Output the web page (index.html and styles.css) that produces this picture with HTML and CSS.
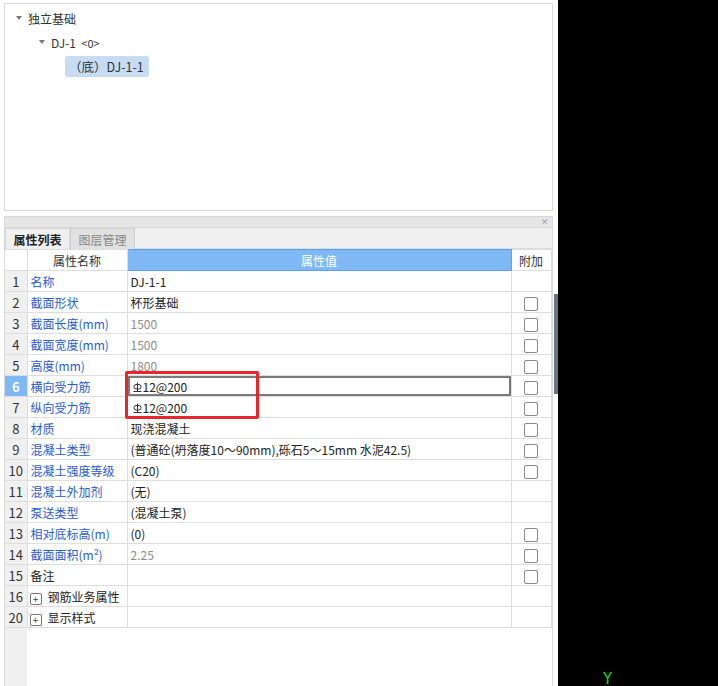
FILE: index.html
```html
<!DOCTYPE html>
<html lang="zh">
<head>
<meta charset="utf-8">
<title>属性列表</title>
<link rel="stylesheet" href="styles.css">
</head>
<body>
<div class="app">
  <div class="left">
    <div class="tree-panel">
      <div class="node lvl0"><span class="tri"></span><span>独立基础</span></div>
      <div class="node lvl1"><span class="tri"></span><span>DJ-1 &nbsp;<small>&lt;0&gt;</small></span></div>
      <div class="node lvl2"><span class="sel">（底）DJ-1-1</span></div>
    </div>
    <div class="prop-panel">
      <div class="titlebar"><span class="close">✕</span></div>
      <div class="tabs">
        <div class="tab active">属性列表</div>
        <div class="tab">图层管理</div>
      </div>
      <div class="grid-wrap">
        <table class="grid">
          <colgroup><col class="c-no"><col class="c-name"><col class="c-val"><col class="c-ext"></colgroup>
          <thead>
            <tr><th class="no"></th><th>属性名称</th><th class="hval">属性值</th><th>附加</th></tr>
          </thead>
          <tbody>
            <tr><td class="no">1</td><td class="nm">名称</td><td>DJ-1-1</td><td></td></tr>
            <tr><td class="no">2</td><td class="nm">截面形状</td><td>杯形基础</td><td><span class="cb"></span></td></tr>
            <tr><td class="no">3</td><td class="nm">截面长度(mm)</td><td class="gr">1500</td><td><span class="cb"></span></td></tr>
            <tr><td class="no">4</td><td class="nm">截面宽度(mm)</td><td class="gr">1500</td><td><span class="cb"></span></td></tr>
            <tr><td class="no">5</td><td class="nm">高度(mm)</td><td class="gr">1800</td><td><span class="cb"></span></td></tr>
            <tr><td class="no cur">6</td><td class="nm">横向受力筋</td><td class="edit"><svg class="rebar" viewBox="0 0 9 11" width="9" height="11"><line x1="4.5" y1="0.5" x2="4.5" y2="9.5"/><rect x="1" y="2.5" width="7" height="4.5" rx="2"/><line x1="0.5" y1="9.5" x2="8.5" y2="9.5"/></svg>12@200</td><td><span class="cb"></span></td></tr>
            <tr><td class="no">7</td><td class="nm">纵向受力筋</td><td><svg class="rebar" viewBox="0 0 9 11" width="9" height="11"><line x1="4.5" y1="0.5" x2="4.5" y2="9.5"/><rect x="1" y="2.5" width="7" height="4.5" rx="2"/><line x1="0.5" y1="9.5" x2="8.5" y2="9.5"/></svg>12@200</td><td><span class="cb"></span></td></tr>
            <tr><td class="no">8</td><td class="nm">材质</td><td>现浇混凝土</td><td><span class="cb"></span></td></tr>
            <tr><td class="no">9</td><td class="nm">混凝土类型</td><td>(普通砼(坍落度10～90mm),砾石5～15mm 水泥42.5)</td><td><span class="cb"></span></td></tr>
            <tr><td class="no">10</td><td class="nm">混凝土强度等级</td><td>(C20)</td><td><span class="cb"></span></td></tr>
            <tr><td class="no">11</td><td class="nm">混凝土外加剂</td><td>(无)</td><td></td></tr>
            <tr><td class="no">12</td><td class="nm">泵送类型</td><td>(混凝土泵)</td><td></td></tr>
            <tr><td class="no">13</td><td class="nm">相对底标高(m)</td><td>(0)</td><td><span class="cb"></span></td></tr>
            <tr><td class="no">14</td><td class="nm">截面面积(m²)</td><td class="gr">2.25</td><td><span class="cb"></span></td></tr>
            <tr><td class="no">15</td><td>备注</td><td></td><td><span class="cb"></span></td></tr>
            <tr><td class="no">16</td><td><span class="plus">+</span>钢筋业务属性</td><td></td><td></td></tr>
            <tr><td class="no">20</td><td><span class="plus">+</span>显示样式</td><td></td><td></td></tr>
          </tbody>
        </table>
        <div class="filler"></div>
        <div class="redbox"></div>
      </div>
    </div>
  </div>
  <div class="gutter"><span class="thumb"></span></div>
  <div class="canvas"><span class="axis-y">Y</span></div>
</div>
</body>
</html>
```

FILE: styles.css
```css
* { box-sizing: border-box; }
html, body { margin: 0; padding: 0; }
body {
  font-family: "Noto Sans CJK SC", "Microsoft YaHei", "Noto Sans", sans-serif;
  font-size: 12px;
  color: #222;
  background: #fff;
  width: 718px;
  height: 686px;
  overflow: hidden;
}
.app { display: flex; height: 686px; }
.left {
  width: 553px;
  display: flex;
  flex-direction: column;
  padding: 3px 0 0 4px;
}
.tree-panel {
  height: 208px;
  border: 1px solid #dadada;
  padding-top: 2px;
  display: flex;
  flex-direction: column;
}
.node {
  height: 24px;
  display: flex;
  align-items: center;
  font-size: 12px;
  color: #333;
}
.node small { font-size: 11px; }
.lvl0 { padding-left: 11px; }
.lvl1 { padding-left: 34px; }
.lvl2 { padding-left: 60px; }
.tri {
  width: 0; height: 0;
  border-left: 3.5px solid transparent;
  border-right: 3.5px solid transparent;
  border-top: 4px solid #777;
  margin-right: 6px;
}
.sel {
  background: #c6dcf3;
  border-radius: 3px;
  height: 21px;
  line-height: 21px;
  padding: 0 5px 0 4px;
  margin-top: 1px;
  font-size: 12.5px;
}
.prop-panel {
  margin-top: 5px;
  flex: 1;
  display: flex;
  flex-direction: column;
  border-left: 1px solid #dadada;
  border-right: 1px solid #dadada;
}
.titlebar {
  height: 12px;
  background: #e6e6e6;
  border-top: 1px solid #d6d6d6;
  border-bottom: 1px solid #d9d9d9;
  display: flex;
  justify-content: flex-end;
  align-items: center;
  padding-right: 3px;
}
.close { font-size: 9px; color: #a8a8a8; line-height: 10px; }
.tabs {
  height: 21px;
  background: #f0f0f0;
  display: flex;
  border-bottom: 1px solid #dcdcdc;
}
.tab {
  width: 65px;
  height: 21px;
  display: flex;
  align-items: center;
  justify-content: center;
  font-size: 12px;
  color: #888;
  background: #e1e1e1;
  border: 1px solid #d0d0d0;
  border-bottom: none;
}
.tab.active {
  background: #efefef;
  color: #222;
  font-weight: bold;
  border-color: #d8d8d8;
}
.grid-wrap {
  position: relative;
  flex: 1;
  display: flex;
  flex-direction: column;
  padding-right: 1px;
}
.grid {
  border-collapse: collapse;
  table-layout: fixed;
  width: 546px;
}
.c-no { width: 22px; }
.c-name { width: 100px; }
.c-val { width: 384px; }
.c-ext { width: 40px; }
.grid th, .grid td {
  height: 21px;
  border: 1px solid #dedede;
  padding: 0 0 0 3px;
  white-space: nowrap;
  overflow: hidden;
  font-size: 12px;
  line-height: 19px;
  text-align: left;
}
.grid th { font-weight: normal; text-align: center; padding: 0; color: #333; }
.grid thead th:first-child, .grid td:first-child { border-left: none; }
.grid th.hval { background: #7eb9f5; color: #fff; border: 1px solid #5aa2ee; }
.grid td.no {
  background: #f0f0f0;
  text-align: center;
  padding: 0;
  color: #333;
  font-size: 13px;
}
.grid td.no.cur { background: #7eb9f5; color: #fff; font-weight: bold; }
.grid td.nm { color: #2a5bd7; }
.grid td.gr { color: #8c8c8c; }
.grid td.edit { box-shadow: inset 0 0 0 2px #7a7a7a; }
.grid td:last-child { text-align: center; padding: 0; }
.rebar {
  fill: none;
  stroke: #333;
  stroke-width: 1;
  vertical-align: -1px;
  margin: 0 1px 0 2px;
}
.cb {
  display: inline-block;
  width: 14px;
  height: 14px;
  border: 1px solid #8a8a8a;
  border-radius: 2px;
  vertical-align: middle;
  margin-left: -1px;
}
.plus {
  display: inline-block;
  width: 12px;
  height: 12px;
  border: 1px solid #777;
  border-radius: 2px;
  font-size: 10px;
  line-height: 9px;
  text-align: center;
  margin: 0 6px 0 -1px;
  vertical-align: -1px;
  color: #444;
}
.filler {
  flex: 1;
  background: linear-gradient(to right, #f0f0f0 0, #f0f0f0 22px, #fff 22px);
}
.redbox {
  position: absolute;
  left: 120px;
  top: 122px;
  width: 134px;
  height: 48px;
  border: 3px solid #e8262b;
  border-radius: 2px;
}
.gutter {
  width: 5px;
  background: #fff;
  position: relative;
}
.thumb {
  position: absolute;
  left: 1px;
  top: 294px;
  width: 4px;
  height: 100px;
  background: #6b7580;
}
.canvas {
  flex: 1;
  background: #000;
  position: relative;
}
.axis-y {
  position: absolute;
  left: 45px;
  top: 670px;
  color: #1ed41e;
  font-family: "DejaVu Sans", sans-serif;
  font-size: 15px;
  line-height: 18px;
}
```
